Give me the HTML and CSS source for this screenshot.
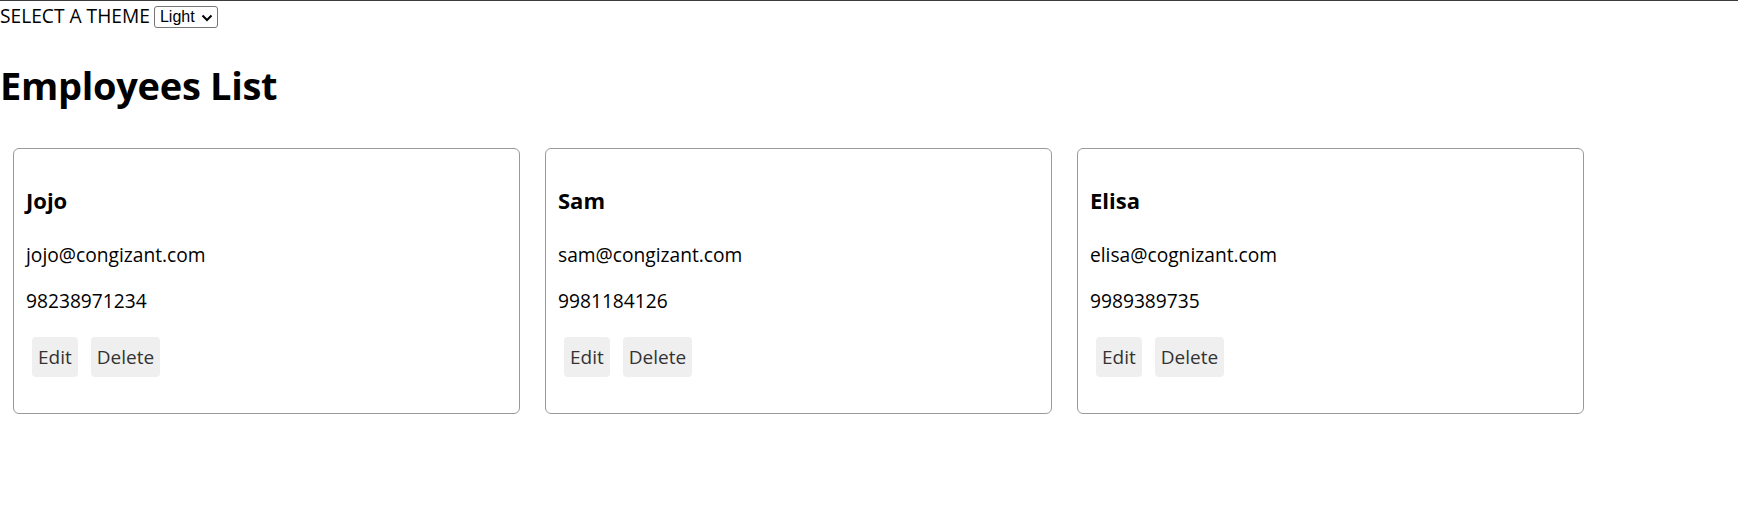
FILE: index.html
```html
<!DOCTYPE html>
<html lang="en">
<head>
<meta charset="utf-8">
<title>Employees List</title>
<link rel="stylesheet" href="styles.css">
</head>
<body>
<div class="topbar">
  <span class="theme-label">SELECT A THEME</span>
  <span class="select-wrap">
    <select class="theme-select">
      <option>Light</option>
      <option>Dark</option>
    </select>
    <svg class="chev" width="12" height="8" viewBox="0 0 12 8"><path d="M1.5 1.5 L6 6 L10.5 1.5" fill="none" stroke="#000" stroke-width="2"/></svg>
  </span>
</div>
<h1 class="title">Employees List</h1>
<div class="cards">
  <div class="card">
    <h3 class="name">Jojo</h3>
    <p class="line email">jojo@congizant.com</p>
    <p class="line phone">98238971234</p>
    <div class="actions">
      <button class="btn">Edit</button>
      <button class="btn">Delete</button>
    </div>
  </div>
  <div class="card">
    <h3 class="name">Sam</h3>
    <p class="line email">sam@congizant.com</p>
    <p class="line phone">9981184126</p>
    <div class="actions">
      <button class="btn">Edit</button>
      <button class="btn">Delete</button>
    </div>
  </div>
  <div class="card">
    <h3 class="name">Elisa</h3>
    <p class="line email">elisa@cognizant.com</p>
    <p class="line phone">9989389735</p>
    <div class="actions">
      <button class="btn">Edit</button>
      <button class="btn">Delete</button>
    </div>
  </div>
</div>
</body>
</html>
```
FILE: styles.css
```css
* { box-sizing: border-box; }
html, body { margin: 0; padding: 0; background: #fff; }
body {
  font-family: "Open Sans", "Noto Sans", sans-serif;
  color: #000;
  border-top: 1px solid #3c3c3c;
}
.topbar {
  display: flex;
  align-items: flex-start;
  height: 29px;
  font-size: 19.2px;
  line-height: 29px;
}
.select-wrap {
  position: relative;
  margin-left: 4px;
  margin-top: 5px;
  height: 22px;
}
.theme-select {
  appearance: none;
  -webkit-appearance: none;
  width: 64px;
  height: 22px;
  border: 1px solid #767676;
  border-radius: 3px;
  background: #fff;
  font-family: "Liberation Sans", Arial, sans-serif;
  font-size: 16px;
  line-height: 20px;
  padding: 0 0 0 5px;
  color: #000;
  display: block;
}
.chev {
  position: absolute;
  right: 5px;
  top: 8px;
  pointer-events: none;
}
.title {
  margin: 30px 0 0 0;
  font-size: 38px;
  font-weight: 700;
  line-height: 50px;
  letter-spacing: -0.3px;
}
.cards {
  display: flex;
  gap: 25px;
  padding-left: 13px;
  margin-top: 38px;
}
.card {
  width: 507px;
  height: 266px;
  border: 1px solid #9a9a9a;
  border-radius: 6px;
  padding: 36px 12px 0 12px;
}
.name {
  margin: 0;
  font-size: 22px;
  font-weight: 700;
  line-height: 31px;
}
.line {
  margin: 0;
  font-size: 19.2px;
  line-height: 27px;
}
.email { margin-top: 25px; }
.phone { margin-top: 19px; }
.actions {
  display: flex;
  gap: 13px;
  margin-top: 23px;
  padding-left: 6px;
}
.btn {
  border: none;
  background: #efefef;
  color: #333;
  border-radius: 4px;
  height: 40px;
  padding: 0 6px;
  font-family: "Open Sans", "Noto Sans", sans-serif;
  font-size: 19px;
  line-height: 40px;
}
```
